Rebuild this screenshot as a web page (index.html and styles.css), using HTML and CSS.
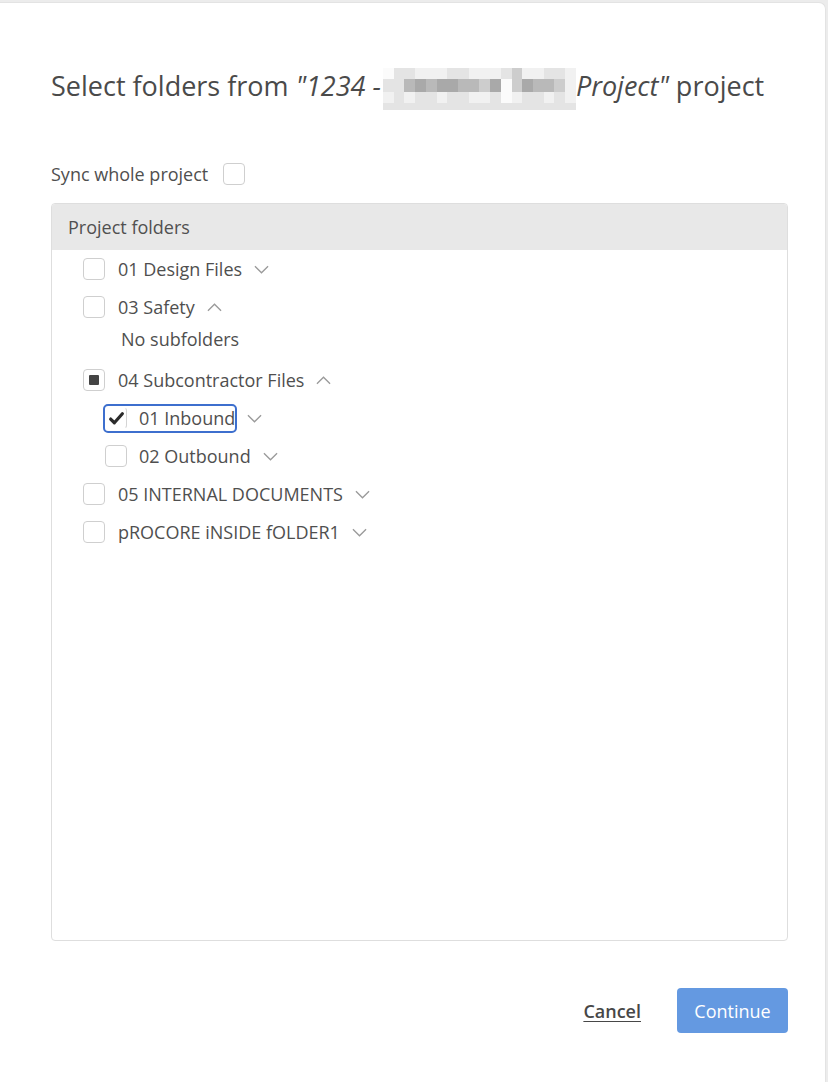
FILE: index.html
```html
<!DOCTYPE html>
<html lang="en">
<head>
<meta charset="utf-8">
<title>Select folders</title>
<link rel="stylesheet" href="styles.css">
</head>
<body>
<div class="dialog">
  <h1 class="title">Select folders from <em class="proj">"1234 -<span class="mosaic"><span class="mosaic-grid"><i class="w"></i><i class="b"></i><i class="b"></i><i class="a"></i><i class="a"></i><i class="a"></i><i class="b"></i><i class="b"></i><i class="a"></i><i class="a"></i><i class="a"></i><i class="b"></i><i class="c"></i><i class="a"></i><i class="a"></i><i class="b"></i><i class="b"></i><i class="a"></i><i class="b"></i><i class="b"></i><i class="d"></i><i class="e"></i><i class="d"></i><i class="e"></i><i class="e"></i><i class="d"></i><i class="d"></i><i class="c"></i><i class="e"></i><i class="w"></i><i class="c"></i><i class="e"></i><i class="d"></i><i class="d"></i><i class="c"></i><i class="a"></i><i class="a"></i><i class="b"></i><i class="a"></i><i class="b"></i><i class="b"></i><i class="a"></i><i class="b"></i><i class="b"></i><i class="a"></i><i class="a"></i><i class="b"></i><i class="w"></i><i class="a"></i><i class="b"></i><i class="b"></i><i class="a"></i><i class="b"></i><i class="a"></i><i class="b"></i><i class="b"></i><i class="b"></i><i class="b"></i><i class="b"></i><i class="b"></i><i class="b"></i><i class="b"></i><i class="b"></i><i class="b"></i><i class="b"></i><i class="b"></i><i class="b"></i><i class="b"></i><i class="b"></i><i class="b"></i><i class="b"></i><i class="b"></i></span></span>Project"</em> project</h1>

  <label class="sync">Sync whole project <span class="cb"></span></label>

  <div class="panel">
    <div class="panel-head">Project folders</div>
    <ul class="tree">
      <li class="row"><span class="cb"></span><span class="name">01 Design Files</span><svg class="chev" viewBox="0 0 16 9"><polyline points="1,1 8,8 15,1"/></svg></li>
      <li class="row"><span class="cb"></span><span class="name">03 Safety</span><svg class="chev" viewBox="0 0 16 9"><polyline points="1,8 8,1 15,8"/></svg></li>
      <li class="empty">No subfolders</li>
      <li class="row"><span class="cb ind"></span><span class="name">04 Subcontractor Files</span><svg class="chev" viewBox="0 0 16 9"><polyline points="1,8 8,1 15,8"/></svg></li>
      <li class="row child"><span class="focus"><span class="cb checked"><svg viewBox="0 0 16 16"><path d="M2.5 8.5 L6 12 L13.5 3.5"/></svg></span><span class="name">01 Inbound</span></span><svg class="chev" viewBox="0 0 16 9"><polyline points="1,1 8,8 15,1"/></svg></li>
      <li class="row child"><span class="cb"></span><span class="name">02 Outbound</span><svg class="chev" viewBox="0 0 16 9"><polyline points="1,1 8,8 15,1"/></svg></li>
      <li class="row"><span class="cb"></span><span class="name">05 INTERNAL DOCUMENTS</span><svg class="chev" viewBox="0 0 16 9"><polyline points="1,1 8,8 15,1"/></svg></li>
      <li class="row"><span class="cb"></span><span class="name">pROCORE iNSIDE fOLDER1</span><svg class="chev" viewBox="0 0 16 9"><polyline points="1,1 8,8 15,1"/></svg></li>
    </ul>
  </div>

  <div class="footer">
    <a class="cancel" href="#">Cancel</a>
    <button class="continue" type="button">Continue</button>
  </div>
</div>
</body>
</html>
```

FILE: styles.css
```css
* { box-sizing: border-box; }

html, body {
  margin: 0;
  padding: 0;
}

body {
  background: #ececec;
  font-family: "Open Sans", "Noto Sans", sans-serif;
  color: #4f4f4f;
  padding-top: 2px;
  height: 1082px;
  overflow: hidden;
}

.dialog {
  width: 826px;
  height: 1080px;
  background: #fff;
  border-top: 1px solid #e3e3e3;
  border-right: 1px solid #e3e3e3;
  border-top-right-radius: 7px;
  padding: 63px 37px 0 51px;
}

.title {
  margin: 0;
  font-size: 27px;
  font-weight: 400;
  line-height: 40px;
  height: 40px;
  color: #4a4a4a;
  white-space: nowrap;
}

.proj {
  font-style: italic;
}

.mosaic {
  display: inline-block;
  overflow: hidden;
  width: 193px;
  height: 42px;
  margin-left: 2px;
  vertical-align: -14px;
}

.mosaic-grid {
  display: grid;
  grid-template-columns: repeat(18, 1fr);
  grid-template-rows: 11px 13px 11px 7px;
  width: 100%;
  height: 100%;
}

.mosaic i { display: block; }
.mosaic .w { background: #fbfbfb; }
.mosaic .a { background: #f1f1f1; }
.mosaic .b { background: #e4e4e4; }
.mosaic .c { background: #cdcdcd; }
.mosaic .d { background: #b9b9b9; }
.mosaic .e { background: #a9a9a9; }

.sync {
  display: flex;
  align-items: center;
  gap: 15px;
  margin-top: 56px;
  height: 24px;
  font-size: 18px;
}

.cb {
  flex: none;
  width: 22px;
  height: 22px;
  border: 1px solid #cfcfcf;
  border-radius: 4px;
  background: #fff;
  display: flex;
  align-items: center;
  justify-content: center;
}

.cb.ind::after {
  content: "";
  width: 10px;
  height: 10px;
  background: #444;
  border-radius: 1px;
}

.cb.checked svg {
  width: 17px;
  height: 17px;
  fill: none;
  stroke: #2b2b2b;
  stroke-width: 3;
  stroke-linecap: round;
  stroke-linejoin: round;
}

.panel {
  margin-top: 17px;
  height: 738px;
  border: 1px solid #dedede;
  border-radius: 4px;
  overflow: hidden;
}

.panel-head {
  height: 46px;
  background: #e8e8e8;
  display: flex;
  align-items: center;
  padding-left: 16px;
  font-size: 18px;
  color: #505050;
}

.tree {
  list-style: none;
  margin: 0;
  padding: 0 0 0 31px;
  font-size: 18px;
}

.row {
  height: 38px;
  display: flex;
  align-items: center;
}

.row > .cb + .name {
  margin-left: 13px;
}

.row.child {
  padding-left: 22px;
}

.row.child > .cb + .name {
  margin-left: 12px;
}

.focus {
  display: inline-flex;
  align-items: center;
  height: 25px;
  outline: 2px solid #3d6fce;
  border-radius: 3px;
}

.focus .cb {
  border-color: transparent #d4d4d4 transparent transparent;
}

.focus .name {
  margin-left: 12px;
}

.chev {
  width: 15px;
  height: 9px;
  margin-left: 12px;
  fill: none;
  stroke: #9a9a9a;
  stroke-width: 1.4;
}

.empty {
  height: 26px;
  margin-bottom: 9px;
  line-height: 26px;
  padding-left: 38px;
  font-size: 18px;
}

.footer {
  display: flex;
  justify-content: flex-end;
  align-items: center;
  gap: 36px;
  margin-top: 47px;
}

.cancel {
  font-size: 18px;
  font-weight: 600;
  color: #474747;
  text-decoration: underline;
  text-underline-offset: 3px;
}

.continue {
  width: 111px;
  height: 45px;
  border: none;
  border-radius: 4px;
  background: #6499e1;
  color: #fff;
  font-family: "Open Sans", "Noto Sans", sans-serif;
  font-size: 18px;
  padding: 0;
}
```
